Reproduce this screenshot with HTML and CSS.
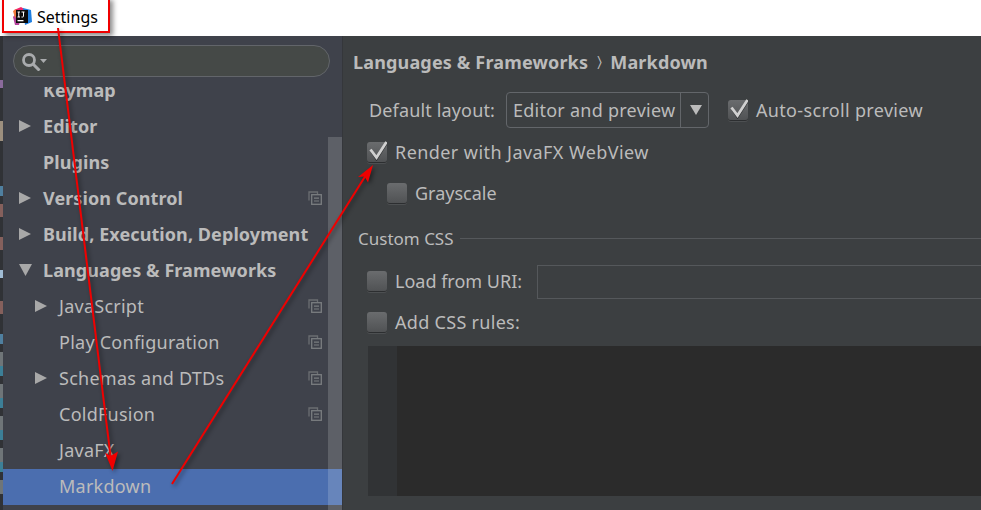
FILE: index.html
```html
<!DOCTYPE html>
<html lang="en">
<head>
    <meta charset="UTF-8">
    <meta name="viewport" content="width=device-width, initial-scale=1.0">
    <title>Settings</title>
    <link rel="stylesheet" href="styles.css">
</head>
<body>
    <svg width="0" height="0" class="defs">
        <symbol id="copy" viewBox="0 0 14 14">
            <path d="M1 9.5V1h8.500v2.500" fill="none" stroke="#6b6e72" stroke-width="1.300"/>
            <rect x="3.700" y="3.700" width="9.600" height="9.600" fill="none" stroke="#7a7d80" stroke-width="1.300"/>
            <path d="M6 7.200h5M6 10h5" stroke="#7a7d80" stroke-width="1.200"/>
        </symbol>
        <symbol id="check" viewBox="0 0 20 22">
            <path d="M4.500 12.500l5 8L20 4" fill="none" stroke="#2e3032" stroke-width="2"/>
            <path d="M3.500 10.500l6 8L19.500 3" fill="none" stroke="#d0d0d0" stroke-width="2.800"/>
        </symbol>
    </svg>

    <div class="titlebar">
        <svg class="app-icon" width="19" height="19" viewBox="0 0 19 19">
            <path d="M1 3l7-3 5 3-8 9z" fill="#f0266b"/>
            <path d="M0 10l4-5 3 9-1 4-4 0z" fill="#b5439c"/>
            <path d="M0 4l3-2 2 6-3 3z" fill="#f07a3c"/>
            <path d="M10 1l8 2 1 12-7 3z" fill="#1f7fe0"/>
            <rect x="3" y="3" width="12" height="13" fill="#0c0c0c"/>
            <rect x="4.500" y="13" width="6" height="1.300" fill="#fff"/>
            <path d="M4.500 5h2.500M5.750 5v5M4.500 10h2.500M8.500 5h3M10.500 5v4.200q0 .8-.8.800H8.500" fill="none" stroke="#fff" stroke-width="1"/>
        </svg>
        <span class="title-text">Settings</span>
    </div>

    <div class="main">
        <div class="gutter">
            <i class="chip chip-purple"></i>
            <i class="chip chip-tan"></i>
            <i class="chip chip-blue"></i>
            <i class="chip chip-red"></i>
            <i class="chip chip-red"></i>
            <i class="chip chip-pale"></i>
            <i class="chip chip-red"></i>
            <i class="chip chip-blue"></i>
            <i class="chip chip-gray"></i>
            <i class="chip chip-teal"></i>
            <i class="chip chip-gray"></i>
            <i class="chip chip-teal"></i>
            <i class="chip chip-gray"></i>
            <i class="chip chip-teal"></i>
            <i class="chip chip-gray"></i>
            <i class="chip chip-teal"></i>
            <i class="chip chip-gray"></i>
        </div>

        <div class="sidebar">
            <div class="search">
                <svg width="28" height="20" viewBox="0 0 28 20">
                    <circle cx="8" cy="9" r="5.500" fill="none" stroke="#a9abad" stroke-width="2.800"/>
                    <path d="M12 13l6.500 6.500" stroke="#a9abad" stroke-width="3"/>
                    <path d="M19 8h7l-3.500 4z" fill="#a9abad"/>
                </svg>
            </div>
            <div class="tree">
                <div class="row bold first"><span class="arrow"></span>Keymap</div>
                <div class="row bold"><span class="arrow right"></span>Editor</div>
                <div class="row bold"><span class="arrow"></span>Plugins</div>
                <div class="row bold"><span class="arrow right"></span>Version Control<svg class="copy"><use href="#copy"/></svg></div>
                <div class="row bold"><span class="arrow right"></span>Build, Execution, Deployment</div>
                <div class="row bold"><span class="arrow down"></span>Languages &amp; Frameworks</div>
                <div class="row child"><span class="arrow right"></span>JavaScript<svg class="copy"><use href="#copy"/></svg></div>
                <div class="row child"><span class="arrow"></span>Play Configuration<svg class="copy"><use href="#copy"/></svg></div>
                <div class="row child"><span class="arrow right"></span>Schemas and DTDs<svg class="copy"><use href="#copy"/></svg></div>
                <div class="row child"><span class="arrow"></span>ColdFusion<svg class="copy"><use href="#copy"/></svg></div>
                <div class="row child"><span class="arrow"></span>JavaFX</div>
                <div class="row child selected"><span class="arrow"></span>Markdown</div>
            </div>
            <div class="scroll-thumb"></div>
        </div>

        <div class="content">
            <div class="crumbs">Languages &amp; Frameworks<span class="crumb-sep">&#x232A;</span>Markdown</div>

            <div class="layout-row">
                <span class="layout-label">Default layout:</span>
                <div class="combo">
                    <span class="combo-value">Editor and preview</span>
                    <span class="combo-btn"></span>
                </div>
                <label class="check auto-scroll"><span class="box"><svg class="tick"><use href="#check"/></svg></span>Auto-scroll preview</label>
            </div>

            <label class="check render"><span class="box"><svg class="tick"><use href="#check"/></svg></span>Render with JavaFX WebView</label>
            <label class="check grayscale"><span class="box"></span>Grayscale</label>

            <div class="section-title">Custom CSS<span class="section-line"></span></div>

            <div class="uri-row">
                <label class="check uri-label"><span class="box"></span>Load from URI:</label>
                <div class="uri-input"></div>
            </div>
            <label class="check css-rules"><span class="box"></span>Add CSS rules:</label>

            <div class="editor">
                <div class="editor-gutter"></div>
                <div class="editor-body"></div>
            </div>
        </div>
    </div>

    <!-- annotations drawn on top of the screenshot -->
    <div class="red-box"></div>
    <svg class="notes" width="981" height="510" viewBox="0 0 981 510">
        <g class="note-arrows">
            <path d="M58 28L111 460" fill="none" stroke="#f00000" stroke-width="2"/>
            <path d="M112.500 471L105 452.500 110.500 456 118 451.500z" fill="#f00000"/>
            <path d="M172 484L366 175" fill="none" stroke="#f00000" stroke-width="2"/>
            <path d="M373 165L358 177 364.500 176.500 368 182.500z" fill="#f00000"/>
        </g>
    </svg>
</body>
</html>
```

FILE: styles.css
```css
* {
    box-sizing: border-box;
}

body {
    position: relative;
    width: 981px;
    height: 510px;
    margin: 0;
    overflow: hidden;
    font-family: "Noto Sans", Arial, sans-serif;
    font-size: 18px;
    color: #bbbbbb;
    background-color: #3c3f41;
}

.defs {
    position: absolute;
}

/* title bar */
.titlebar {
    display: flex;
    align-items: center;
    height: 36px;
    padding: 0 0 3px 13px;
    background-color: #fff;
}

.app-icon {
    flex: none;
}

.title-text {
    margin-left: 5px;
    font-size: 16px;
    color: #000;
}

.main {
    display: flex;
    height: 474px;
}

/* bits of the editor window behind the dialog */
.gutter {
    display: flex;
    flex-direction: column;
    width: 3px;
    padding-top: 44px;
    background-color: #303236;
}

.chip {
    display: block;
    flex: none;
    height: 8px;
}

.chip-purple { margin-bottom: 33px; background-color: #8a6a9c; }
.chip-tan { height: 20px; margin-bottom: 45px; background-color: #9c8f7e; }
.chip-blue { height: 10px; margin-bottom: 8px; background-color: #4f7f9f; }
.chip-red { height: 13px; margin-bottom: 20px; background-color: #85605c; }
.chip-pale { margin-bottom: 23px; background-color: #a0bcd4; }
.chip-gray { height: 14px; background-color: #6f7578; }
.chip-teal { height: 10px; margin-bottom: 8px; background-color: #3c7f97; }

/* sidebar */
.sidebar {
    position: relative;
    width: 340px;
    flex: none;
    background-color: #3f424b;
    border-right: 1px solid #35373b;
}

.search {
    display: flex;
    align-items: center;
    width: 317px;
    height: 32px;
    margin: 9px 0 0 10px;
    padding-left: 7px;
    background-color: #454947;
    border: 1px solid #62656a;
    border-radius: 16px;
}

.tree {
    height: 418px;
    margin-top: 10px;
    overflow: hidden;
    letter-spacing: 0.08px;
}

.row {
    display: flex;
    align-items: center;
    height: 36px;
    padding-left: 16px;
    padding-right: 20px;
    padding-bottom: 2px;
    white-space: nowrap;
}

.row.first {
    margin-top: -14px;
}

.row.bold {
    font-weight: 700;
}

.row.child {
    padding-left: 32px;
    letter-spacing: 0.25px;
}

.row.selected {
    background-color: #4b6eaf;
}

.arrow {
    flex: none;
    width: 24px;
    height: 12px;
}

.arrow.right {
    background-color: #a8a8a8;
    clip-path: polygon(0 0, 12px 6px, 0 12px);
}

.arrow.down {
    background-color: #a8a8a8;
    clip-path: polygon(0 0, 13px 0, 6.500px 12px);
}

.copy {
    flex: none;
    width: 14px;
    height: 14px;
    margin-left: auto;
}

.scroll-thumb {
    position: absolute;
    top: 101px;
    right: 0;
    bottom: 0;
    width: 14px;
    background-color: rgba(255, 255, 255, 0.16);
}

/* settings panel */
.content {
    flex: 1;
    min-width: 0;
    padding-left: 10px;
}

.crumbs {
    height: 24px;
    margin-top: 13px;
    font-weight: 700;
    line-height: 24px;
    letter-spacing: 0.16px;
}

.crumb-sep {
    margin: 0 8px 0 9px;
    font-size: 15px;
    font-weight: 400;
    vertical-align: 2px;
}

.layout-row {
    display: flex;
    align-items: center;
    height: 36px;
    margin-top: 19px;
    padding-left: 16px;
}

.layout-label {
    width: 137px;
    letter-spacing: 0.15px;
}

.combo {
    display: flex;
    align-items: center;
    width: 203px;
    height: 36px;
    padding-left: 6px;
    border: 1px solid #63666a;
    border-radius: 4px;
    letter-spacing: 0.25px;
}

.combo-value {
    width: 167px;
    white-space: nowrap;
}

.combo-btn {
    position: relative;
    height: 34px;
    flex: 1;
    border-left: 1px solid #63666a;
}

.combo-btn::after {
    content: "";
    position: absolute;
    top: 12px;
    left: 9px;
    width: 12px;
    height: 10px;
    background-color: #bbbbbb;
    clip-path: polygon(0 0, 100% 0, 50% 100%);
}

.check {
    display: flex;
    align-items: center;
    height: 22px;
    white-space: nowrap;
}

.auto-scroll {
    margin-left: 19px;
    letter-spacing: 0.33px;
}

.box {
    position: relative;
    flex: none;
    width: 20px;
    height: 20px;
    margin-right: 8px;
    background: linear-gradient(#6a6c6e, #505254);
    border-radius: 3px;
    box-shadow: 0 1px 0 #2c2e30, 0 2px 0 #4d5052;
}

.tick {
    position: absolute;
    top: -3px;
    left: 0;
    width: 20px;
    height: 22px;
    overflow: visible;
}

.render {
    margin: 13px 0 0 14px;
    letter-spacing: 0.43px;
}

.grayscale {
    margin: 19px 0 0 34px;
}

.section-title {
    display: flex;
    align-items: center;
    height: 24px;
    margin-top: 22px;
    margin-left: 5px;
    font-size: 17px;
}

.section-line {
    flex: 1;
    height: 1px;
    margin-left: 6px;
    background-color: #55585b;
}

.uri-row {
    display: flex;
    align-items: center;
    height: 34px;
    margin-top: 15px;
    padding-left: 14px;
}

.uri-label {
    margin-top: -2px;
}

.uri-input {
    flex: 1;
    height: 34px;
    margin-left: 15px;
    border: 1px solid #55585b;
    border-right: 0;
}

.css-rules {
    margin: 12px 0 0 14px;
    letter-spacing: 0.3px;
}

.editor {
    display: flex;
    height: 150px;
    margin: 13px 0 0 15px;
}

.editor-gutter {
    width: 29px;
    background-color: #313335;
}

.editor-body {
    flex: 1;
    background-color: #2b2b2b;
}

/* annotations */
.red-box {
    position: absolute;
    top: -3px;
    left: 2px;
    width: 108px;
    height: 36px;
    border: 2px solid #f00000;
    box-shadow: 3px 3px 5px rgba(0, 0, 0, 0.45);
}

.notes {
    position: absolute;
    top: 0;
    left: 0;
}

.note-arrows {
    filter: drop-shadow(2px 2px 2px rgba(0, 0, 0, 0.45));
}
```
